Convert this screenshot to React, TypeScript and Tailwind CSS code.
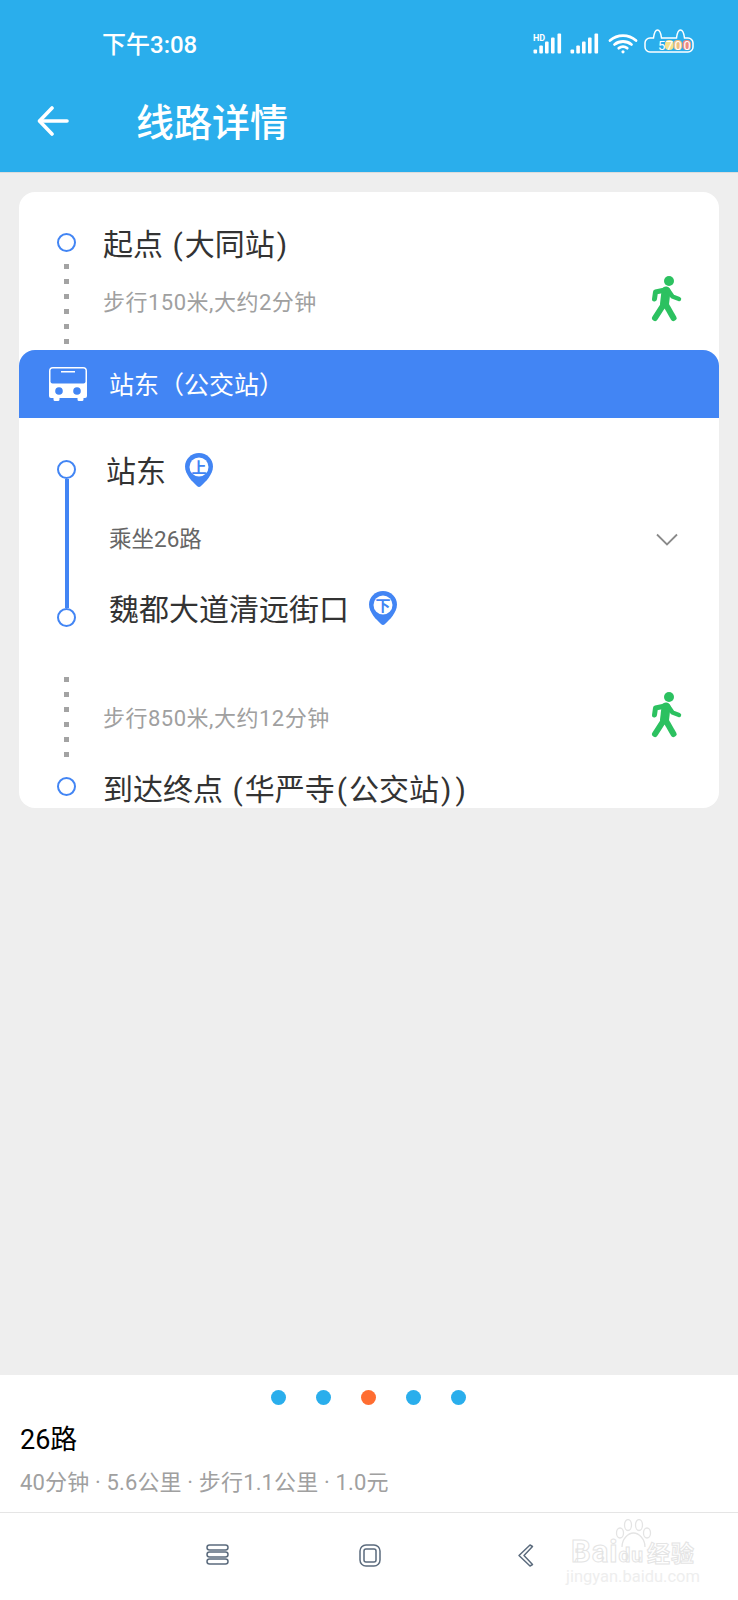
import React from 'react';

// Signal strength bars, optionally with the small HD tag above
const Signal = ({ hd = false }: { hd?: boolean }) => (
	<svg width="29" height="21" viewBox="0 0 29 21" fill="#ffffff">
		{hd && (
			<text x="0" y="7.500" fontSize="9" fontWeight="700" fontFamily="Roboto, sans-serif">
				HD
			</text>
		)}
		<rect x="0.500" y="16.500" width="3.600" height="4" rx="1" />
		<rect x="6.300" y="12.500" width="3.600" height="8" rx="1" />
		<rect x="12" y="8.500" width="3.600" height="12" rx="1" />
		<rect x="18" y="4.500" width="3.600" height="16" rx="1" />
		<rect x="24.500" y="0.500" width="3.600" height="20" rx="1" />
	</svg>
);

const Wifi = () => (
	<svg width="30" height="21" viewBox="0 0 30 21" fill="none" stroke="#ffffff" strokeWidth="2.800" strokeLinecap="round">
		<path d="M2 7.500C9.500 1 20.500 1 28 7.500" />
		<path d="M6.500 11.500C11.500 7.500 18.500 7.500 23.500 11.500" />
		<path d="M10.800 15.200C13.400 13.300 16.600 13.300 19.200 15.200" />
		<circle cx="15" cy="18.800" r="1.600" fill="#ffffff" stroke="none" />
	</svg>
);

// Battery skin with cat ears
const Battery = () => (
	<svg width="50" height="25" viewBox="0 0 50 25" fill="none">
		<path
			d="M6 10h3.500C10 6 11 2 13.500 2S17 6 17.500 10h15C33 6 34 2 36.500 2S40 6 40.500 10H44a5 5 0 0 1 5 5v4a5 5 0 0 1-5 5H6a5 5 0 0 1-5-5v-4a5 5 0 0 1 5-5Z"
			stroke="#ffffff"
			strokeWidth="1.500"
		/>
		<rect x="21" y="12" width="8.500" height="10" rx="4" fill="#f6e28c" />
		<rect x="29.500" y="12" width="8.500" height="10" rx="4" fill="#eec07f" />
		<rect x="38.500" y="12" width="8.500" height="10" rx="4" fill="#ee8a80" />
		<g fontSize="13" fill="#ffffff" fontFamily="Roboto, sans-serif">
			<text x="14" y="21.500">5</text>
			<text x="22" y="21.500">7</text>
			<text x="30.500" y="21.500">0</text>
			<text x="39.500" y="21.500">0</text>
		</g>
	</svg>
);

const Walker = () => (
	<svg width="31" height="46" viewBox="0 0 31 46" fill="none" stroke="#2cc160" strokeLinecap="round" strokeLinejoin="round" className="shrink-0">
		<circle cx="18" cy="5" r="5" fill="#2cc160" stroke="none" />
		<path d="M15 15 13.500 28" strokeWidth="9" />
		<path d="M13 28 4 42" strokeWidth="6" />
		<path d="M14.500 28 22.500 42" strokeWidth="6" />
		<path d="M14 14 4.500 16 3.500 23" strokeWidth="5" />
		<path d="M17 14 21.500 20.500 28 23" strokeWidth="4.500" />
	</svg>
);

const Bus = () => (
	<svg width="38" height="34" viewBox="0 0 38 34" fill="#ffffff">
		<path d="M4 0h30a4 4 0 0 1 4 4v25a2 2 0 0 1-2 2h-1.500v1.500a1.500 1.500 0 0 1-1.500 1.500h-3a1.500 1.500 0 0 1-1.500-1.500V31H10.500v1.500A1.500 1.500 0 0 1 9 34H6a1.500 1.500 0 0 1-1.500-1.500V31H2a2 2 0 0 1-2-2V4a4 4 0 0 1 4-4Z" />
		<rect x="1.500" y="1.500" width="35" height="15" rx="2" fill="#4285f4" />
		<rect x="12" y="4" width="14" height="1.500" fill="#ffffff" />
		<circle cx="10" cy="24" r="3.800" fill="#4285f4" />
		<circle cx="28" cy="24" r="3.800" fill="#4285f4" />
	</svg>
);

// Boarding / alighting map pin
const Pin = ({ label }: { label: string }) => (
	<svg width="28" height="34" viewBox="0 0 28 34" className="shrink-0">
		<path d="M14 0c7.700 0 14 6 14 13.600 0 8-7.500 15.400-12 19.500a3 3 0 0 1-4 0C7.500 29 0 21.600 0 13.600 0 6 6.300 0 14 0Z" fill="#4285f4" />
		<circle cx="14" cy="14" r="9.500" fill="#ffffff" />
		<text x="14" y="19.500" textAnchor="middle" fontSize="15" fontWeight="700" fill="#4285f4" fontFamily="'Noto Sans CJK SC', sans-serif">
			{label}
		</text>
	</svg>
);

const Circle = () => (
	<div className="h-[19px] w-[19px] shrink-0 rounded-full border-2 border-[#4285f4] bg-white" />
);

const DottedLine = () => (
	<div className="flex flex-col items-center gap-[10px]">
		{[0, 1, 2, 3, 4, 5].map((i) => (
			<div key={i} className="h-[5px] w-[5px] bg-[#a3a3a3]" />
		))}
	</div>
);

// Parentheses in stop names run wider than the latin glyphs
const Paren = ({ children }: { children: string }) => (
	<span className="px-[2px]">{children}</span>
);

const Title = ({ children, className = '' }: { children: React.ReactNode; className?: string }) => (
	<div className={`flex h-[38px] items-center pt-[3px] text-[30px] leading-[38px] whitespace-pre text-[#333333] ${className}`}>
		{children}
	</div>
);

const WalkRow = ({ text, className = '' }: { text: string; className?: string }) => (
	<div className={`flex h-[44px] items-center justify-between pr-[37px] ${className}`}>
		<span className="text-[22px] tracking-[0.500px] text-[#a0a0a0]">{text}</span>
		<div className="-mt-[6px] flex h-[46px] items-center">
			<Walker />
		</div>
	</div>
);

const PagerDots = () => (
	<div className="flex justify-center gap-[30px] pr-[1px]">
		{[0, 1, 2, 3, 4].map((i) => (
			<div key={i} className={`h-[15px] w-[15px] rounded-full ${i === 2 ? 'bg-[#ff6d31]' : 'bg-[#2aaeec]'}`} />
		))}
	</div>
);

const Watermark = () => (
	<div className="absolute top-[6px] left-[566px] flex w-[134px] flex-col items-center text-white">
		<svg width="40" height="30" viewBox="0 0 40 30" fill="none" stroke="#e4e4e4" strokeWidth="1.300" className="ml-[2px]">
			<ellipse cx="6" cy="14" rx="3.500" ry="5" />
			<ellipse cx="14" cy="6" rx="3.500" ry="5.500" />
			<ellipse cx="25" cy="6" rx="3.500" ry="5.500" />
			<ellipse cx="33" cy="14" rx="3.500" ry="5" />
			<path d="M8 28c0-8 6-14 11.500-14S31 20 31 28" />
		</svg>
		<div className="-mt-[13px] flex items-baseline text-[31px] leading-[32px] font-bold tracking-[1px] [-webkit-text-stroke:1px_#e4e4e4]">
			<span>Bai</span>
			<span className="text-[21px]">du</span>
			<span className="ml-[3px] text-[23px]">经验</span>
		</div>
		<div className="-mt-[3px] text-[16.500px] leading-[18px] whitespace-nowrap text-[#eeeeee]">jingyan.baidu.com</div>
	</div>
);

export default function App() {
	return (
		<div className="flex h-[1600px] w-[738px] flex-col overflow-hidden bg-[#eeeeee] font-['Roboto','Noto_Sans_CJK_SC',sans-serif]">
			{/* Header */}
			<header className="h-[173px] shrink-0 border-b border-[#dcdcdc] bg-[#2aaeec] text-white">
				<div className="flex h-[88px] items-center justify-between pr-[44px] pl-[102px]">
					<span className="pt-[1px] text-[24px] font-medium">下午3:08</span>
					<div className="-mt-[2px] flex items-center">
						<Signal hd />
						<div className="ml-[8px]">
							<Signal />
						</div>
						<div className="ml-[9px]">
							<Wifi />
						</div>
						<div className="-mt-[6px] ml-[6px]">
							<Battery />
						</div>
					</div>
				</div>
				<div className="flex h-[66px] items-center pl-[37px]">
					<svg width="32" height="30" viewBox="0 0 32 30" fill="none" stroke="#ffffff" strokeWidth="3.600" strokeLinecap="round" strokeLinejoin="round">
						<path d="M30 15H3" />
						<path d="M15 2 2.500 15 15 28" />
					</svg>
					<span className="ml-[67px] pt-[4px] text-[38px] font-medium">线路详情</span>
				</div>
			</header>

			<main className="flex-1 px-[19px] pt-[19px]">
				<div className="h-[616px] w-[700px] overflow-hidden rounded-2xl bg-white">
					{/* Walk to the first stop */}
					<section className="flex h-[158px]">
						<div className="ml-[38px] flex w-[19px] flex-col items-center pt-[41px]">
							<Circle />
							<div className="mt-[12px]">
								<DottedLine />
							</div>
						</div>
						<div className="ml-[27px] flex-1 pt-[32px]">
							<Title>
								起点 <Paren>(</Paren>大同站<Paren>)</Paren>
							</Title>
							<WalkRow text="步行150米,大约2分钟" className="mt-[18px]" />
						</div>
					</section>

					{/* Bus stop bar */}
					<div className="flex h-[68px] items-center rounded-t-2xl bg-[#4285f4] pl-[30px] text-white">
						<Bus />
						<span className="ml-[22px] pt-[3px] text-[25px]">站东（公交站）</span>
					</div>

					{/* Bus ride */}
					<section className="flex h-[242px]">
						<div className="ml-[38px] flex w-[19px] flex-col items-center pt-[42px]">
							<Circle />
							<div className="h-[129px] w-1 bg-[#4285f4]" />
							<Circle />
						</div>
						<div className="ml-[30px] flex-1 pt-[32px]">
							<div className="flex h-[40px] items-center gap-[19px]">
								<Title>站东</Title>
								<Pin label="上" />
							</div>
							<div className="mt-[29px] ml-[3px] flex h-[40px] items-center justify-between pr-[41px]">
								<span className="pt-[2px] text-[22.500px] text-[#666666]">乘坐26路</span>
								<svg width="22" height="13" viewBox="0 0 22 13" fill="none" stroke="#8a8a8a" strokeWidth="1.800">
									<path d="M1 1.500 11 11.500 21 1.500" />
								</svg>
							</div>
							<div className="mt-[29px] ml-[3px] flex h-[40px] items-center gap-[20px]">
								<Title>魏都大道清远街口</Title>
								<Pin label="下" />
							</div>
						</div>
					</section>

					{/* Walk to the destination */}
					<section className="flex h-[148px]">
						<div className="ml-[38px] flex w-[19px] flex-col items-center pt-[17px]">
							<DottedLine />
							<div className="mt-[20px]">
								<Circle />
							</div>
						</div>
						<div className="ml-[27px] flex-1 pt-[36px]">
							<WalkRow text="步行850米,大约12分钟" />
							<Title className="mt-[29px]">
								到达终点 <Paren>(</Paren>华严寺<Paren>(</Paren>公交站<Paren>)</Paren>
								<Paren>)</Paren>
							</Title>
						</div>
					</section>
				</div>
			</main>

			{/* Route summary */}
			<div className="h-[137px] shrink-0 bg-white pt-[15px]">
				<PagerDots />
				<div className="mt-[17px] pl-[20px] text-[27px] leading-[36px] text-black">26路</div>
				<div className="mt-[7px] pl-[20px] text-[22px] leading-[35px] tracking-[0.150px] text-[#a0a0a0]">40分钟 · 5.6公里 · 步行1.1公里 · 1.0元</div>
			</div>

			{/* Navigation bar */}
			<nav className="relative flex h-[88px] shrink-0 items-center border-t border-[#e5e5e5] bg-white pb-[2px]">
				<div className="flex w-full justify-between pr-[204px] pl-[206px]">
					<svg width="23" height="21" viewBox="0 0 23 21" fill="none" stroke="#5b6b7d" strokeWidth="1.500">
						<rect x="1" y="1" width="21" height="5" rx="2.500" />
						<rect x="1" y="8" width="21" height="5" rx="2.500" />
						<rect x="1" y="15" width="21" height="5" rx="2.500" />
					</svg>
					<svg width="22" height="23" viewBox="0 0 22 23" fill="none" stroke="#5b6b7d" strokeWidth="1.500" className="mr-[6px]">
						<rect x="1" y="1" width="20" height="21" rx="6" />
						<rect x="5" y="5" width="12" height="13" rx="2" />
					</svg>
					<svg width="17" height="23" viewBox="0 0 17 23" fill="none" stroke="#5b6b7d" strokeWidth="1.500" strokeLinejoin="round">
						<path d="M13 1 2 11.500 13 22l2.500-1.500L7 11.500 15.500 2.500Z" />
					</svg>
				</div>
				<Watermark />
			</nav>
		</div>
	);
}
